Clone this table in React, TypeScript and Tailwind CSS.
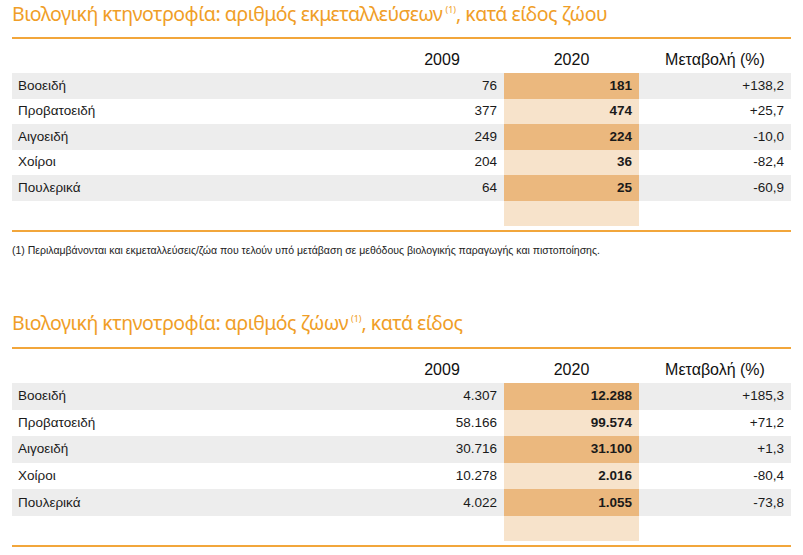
const tables = [
  {
    title: "Βιολογική κτηνοτροφία: αριθμός εκμεταλλεύσεων",
    tail: ", κατά είδος ζώου",
    rowH: "h-[25.6px]",
    rows: [
      ["Βοοειδή", "76", "181", "+138,2"],
      ["Προβατοειδή", "377", "474", "+25,7"],
      ["Αιγοειδή", "249", "224", "-10,0"],
      ["Χοίροι", "204", "36", "-82,4"],
      ["Πουλερικά", "64", "25", "-60,9"],
    ],
  },
  {
    title: "Βιολογική κτηνοτροφία: αριθμός ζώων",
    tail: ", κατά είδος",
    rowH: "h-[26.6px]",
    rows: [
      ["Βοοειδή", "4.307", "12.288", "+185,3"],
      ["Προβατοειδή", "58.166", "99.574", "+71,2"],
      ["Αιγοειδή", "30.716", "31.100", "+1,3"],
      ["Χοίροι", "10.278", "2.016", "-80,4"],
      ["Πουλερικά", "4.022", "1.055", "-73,8"],
    ],
  },
];

function Title({ text, tail, h }: { text: string; tail: string; h: string }) {
  return (
    <div className={`${h} flex items-end border-b-2 border-[#f2a63b] pb-[14px]`}>
      <h2 className="font-['Noto_Sans',sans-serif] text-[19.5px] leading-none tracking-[-0.5px] text-[#f09e27]">
        {text}
        <span className="relative -top-[8px] ml-[3px] text-[9px] tracking-normal">(1)</span>
        {tail}
      </h2>
    </div>
  );
}

function Table({ t }: { t: (typeof tables)[number] }) {
  return (
    <div>
      <div className="flex h-[34px] items-end pb-[5px] text-[16px] leading-none text-[#111]">
        <div className="w-[368px]" />
        <div className="w-[124px] text-center">2009</div>
        <div className="w-[135px] text-center">2020</div>
        <div className="w-[152px] text-center">Μεταβολή (%)</div>
      </div>
      {t.rows.map((r, i) => (
        <div
          key={i}
          className={`flex ${t.rowH} items-center text-[13.5px] text-[#1a1a1a] ${i % 2 === 0 ? "bg-[#ededed]" : "bg-white"}`}
        >
          <div className="w-[368px] pl-[6px]">{r[0]}</div>
          <div className="w-[124px] pr-[7px] text-right">{r[1]}</div>
          <div
            className={`flex h-full w-[135px] items-center justify-end pr-[7px] font-bold ${i % 2 === 0 ? "bg-[#ebb87e]" : "bg-[#f7e3cb]"}`}
          >
            {r[2]}
          </div>
          <div className="w-[152px] pr-[7px] text-right">{r[3]}</div>
        </div>
      ))}
      <div className="flex h-[25px]">
        <div className="w-[492px]" />
        <div className="w-[135px] bg-[#f7e3cb]" />
      </div>
      <div className="h-[4px]" />
      <div className="h-[2px] bg-[#f2a63b]" />
    </div>
  );
}

export default function App() {
  return (
    <div className="h-[555px] w-[803px] overflow-hidden bg-white font-['Liberation_Sans',Arial,sans-serif]">
      <div className="ml-[12px] w-[779px]">
        <Title text={tables[0].title} tail={tables[0].tail} h="h-[39px]" />
        <Table t={tables[0]} />
        <p className="mt-[11px] text-[10.5px] leading-[15px] text-[#222]">
          (1) Περιλαμβάνονται και εκμεταλλεύσεις/ζώα που τελούν υπό μετάβαση σε μεθόδους βιολογικής παραγωγής και πιστοποίησης.
        </p>
        <Title text={tables[1].title} tail={tables[1].tail} h="h-[91px]" />
        <Table t={tables[1]} />
      </div>
    </div>
  );
}
